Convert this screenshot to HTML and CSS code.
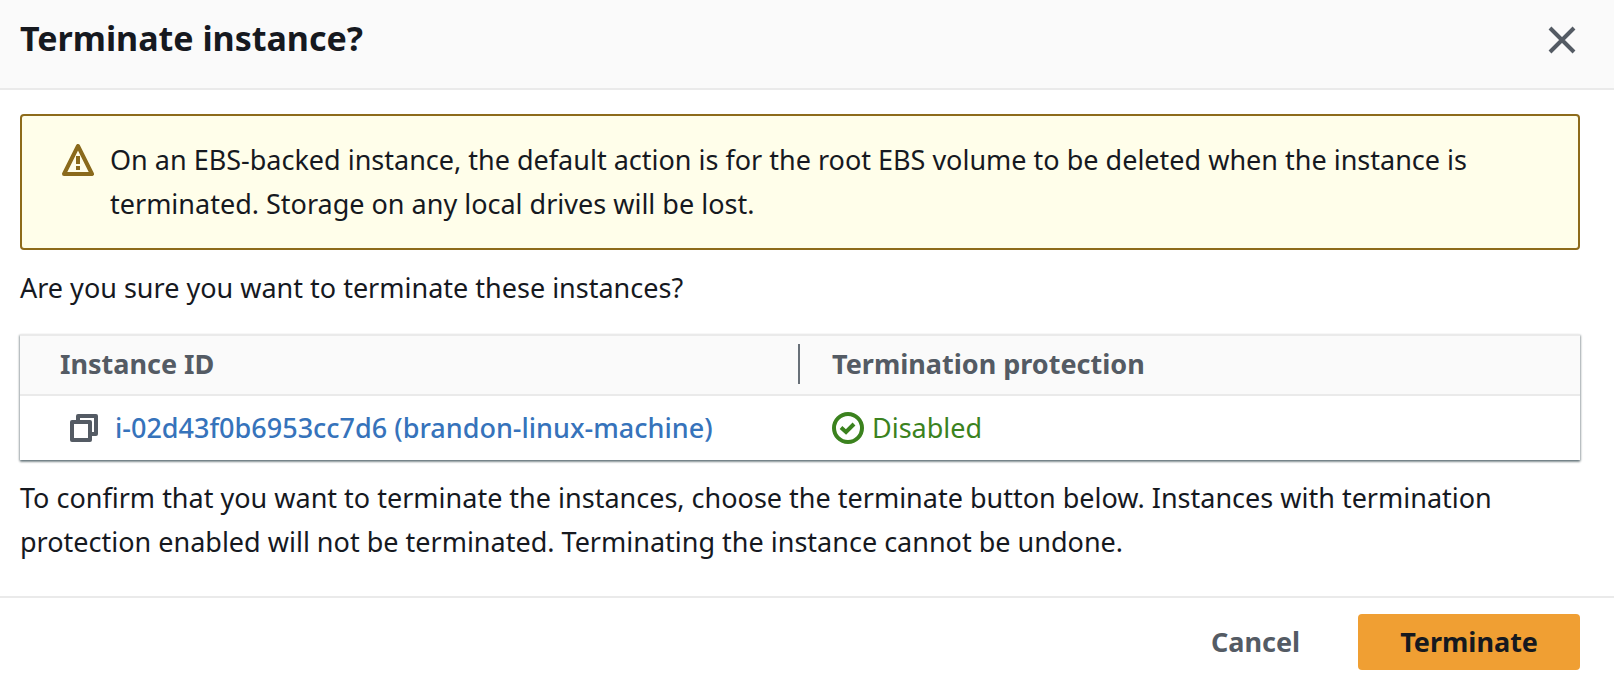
FILE: index.html
```
<!DOCTYPE html>
<html lang="en">
<head>
<meta charset="utf-8">
<meta name="viewport" content="width=device-width, initial-scale=1">
<title>Terminate instance?</title>
<link rel="stylesheet" href="styles.css">
</head>
<body>
<main class="modal" role="dialog" aria-labelledby="modal-title">
  <header class="modal-header">
    <h1 class="modal-title" id="modal-title">Terminate instance?</h1>
    <button class="close-button" type="button" aria-label="Close">
      <svg class="icon" viewBox="0 0 16 16" aria-hidden="true"><path d="M2 2l12 12M14 2L2 14" fill="none" stroke="currentColor" stroke-width="2"/></svg>
    </button>
  </header>
  <div class="modal-body">
    <div class="alert" role="alert">
      <svg class="icon alert-icon" viewBox="0 0 16 16" aria-hidden="true"><path d="M8 1L15 15H1z" fill="none" stroke="currentColor" stroke-width="2" stroke-linejoin="round"/><path d="M8 6v4M8 11v2" fill="none" stroke="currentColor" stroke-width="2"/></svg>
      <p class="text">On an EBS-backed instance, the default action is for the root EBS volume to be deleted when the instance is terminated. Storage on any local drives will be lost.</p>
    </div>
    <p class="text question">Are you sure you want to terminate these instances?</p>
    <table class="table">
      <thead>
        <tr><th scope="col"><div class="head-cell">Instance ID</div></th><th scope="col">Termination protection</th></tr>
      </thead>
      <tbody>
        <tr>
          <td>
            <div class="instance">
              <button class="copy-button" type="button" aria-label="Copy instance ID">
                <svg class="icon" viewBox="0 0 16 16" aria-hidden="true"><path d="M2 5h9v9H2zM5 5V2h9v9h-3" fill="none" stroke="currentColor" stroke-width="2" stroke-linejoin="round"/></svg>
              </button>
              <a class="link" href="#">i-02d43f0b6953cc7d6 (brandon-linux-machine)</a>
            </div>
          </td>
          <td>
            <div class="status">
              <svg class="icon" viewBox="0 0 16 16" aria-hidden="true"><circle cx="8" cy="8" r="7" fill="none" stroke="currentColor" stroke-width="2"/><path d="M4.5 7.8L7 10l4-4" fill="none" stroke="currentColor" stroke-width="2"/></svg>
              <span>Disabled</span>
            </div>
          </td>
        </tr>
      </tbody>
    </table>
    <p class="text confirm">To confirm that you want to terminate the instances, choose the terminate button below. Instances with termination protection enabled will not be terminated. Terminating the instance cannot be undone.</p>
  </div>
  <footer class="modal-footer">
    <button class="button" type="button">Cancel</button>
    <button class="button button-primary" type="button">Terminate</button>
  </footer>
</main>
</body>
</html>
```
FILE: styles.css
```
* {
  box-sizing: border-box;
}

body {
  margin: 0;
  background: #fff;
  color: #16191f;
  font: 430 27px/44px "Noto Sans", "Open Sans", sans-serif;
}

button {
  margin: 0;
  padding: 0;
  border: 0;
  background: none;
  color: #545b64;
  font: inherit;
  cursor: pointer;
}

.icon {
  display: block;
  flex: none;
  width: 32px;
  height: 32px;
}

.modal-header {
  display: flex;
  justify-content: space-between;
  align-items: flex-start;
  padding: 16px 36px 24px 20px;
  border-bottom: 2px solid #eaeaea;
  background: #fafafa;
}

.modal-title {
  margin: 0;
  font-size: 34px;
  line-height: 44px;
  font-weight: 700;
}

.close-button {
  padding: 8px 0;
}

.modal-body {
  padding: 24px 34px 32px 20px;
}

.text {
  margin: 0;
  font-weight: 400;
}

.alert {
  display: flex;
  gap: 16px;
  padding: 22px 40px;
  border: 2px solid #8d6b1b;
  border-radius: 4px;
  background: #fffeea;
}

.alert-icon {
  margin-top: 6px;
  color: #8a6a1c;
}

.question {
  margin: 16px 0 24px;
}

.table {
  width: 100%;
  border-collapse: separate;
  border-spacing: 0;
  table-layout: fixed;
  background: #fff;
  box-shadow: 0 2px 2px rgba(0, 28, 36, 0.35), 1px 1px 2px rgba(0, 28, 36, 0.25), -1px 1px 2px rgba(0, 28, 36, 0.25);
}

.table th {
  padding: 8px 32px 10px;
  border-top: 2px solid #eaeaea;
  border-bottom: 2px solid #eaeaea;
  background: #fafafa;
  color: #545b64;
  font-weight: 700;
  line-height: 40px;
  text-align: left;
}

.table th:first-child {
  padding: 8px 0 10px 40px;
}

.head-cell {
  border-right: 2px solid #687078;
}

.table td {
  padding: 10px 32px;
}

.table td:first-child {
  padding-left: 48px;
}

.instance {
  display: flex;
  align-items: center;
  gap: 15px;
}

.link {
  color: #3673bb;
  font-weight: 500;
  text-decoration: none;
  white-space: nowrap;
}

.status {
  display: flex;
  align-items: center;
  gap: 8px;
  color: #3b821e;
}

.confirm {
  margin-top: 16px;
}

.modal-footer {
  display: flex;
  justify-content: flex-end;
  gap: 16px;
  padding: 16px 34px 10px 20px;
  border-top: 2px solid #eaeaea;
}

.button {
  padding: 6px 42px;
  border-radius: 4px;
  font-weight: 700;
}

.button-primary {
  background: #f09f33;
  color: #16191f;
}
```
